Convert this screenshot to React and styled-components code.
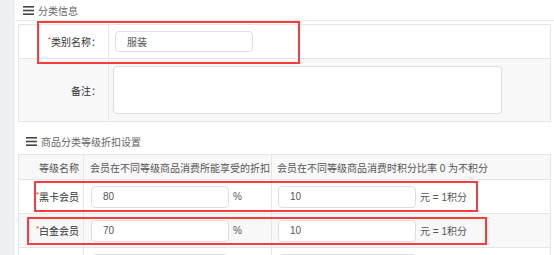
import React from 'react';
import styled, { createGlobalStyle } from 'styled-components';

const GlobalStyle = createGlobalStyle`
  html, body {
    margin: 0;
    padding: 0;
    background: #fff;
    overflow: hidden;
  }
  body {
    font-family: "Liberation Sans", "Noto Sans CJK SC", sans-serif;
    font-size: 10px;
    color: #555;
  }
`;

const Page = styled.div`
  position: relative;
  display: flex;
  width: 554px;
  height: 255px;
  overflow: hidden;
`;

const Side = styled.div`
  width: 15px;
  flex: none;
  background: #eef0f4;
`;

const Main = styled.div`
  flex: 1;
  display: flex;
  flex-direction: column;
`;

const SectionHead = styled.div`
  display: flex;
  align-items: center;
  gap: 4px;
  flex: none;
  height: ${p => p.$h}px;
  padding-left: ${p => p.$pad}px;
  padding-top: ${p => p.$top || 0}px;
  border-bottom: ${p => (p.$line ? '1px solid #ececec' : 'none')};
  color: #666;
  font-size: 10px;
  box-sizing: border-box;
`;

const Burger = () => (
  <svg width="11" height="9" viewBox="0 0 11 9">
    <rect x="0" y="0" width="11" height="1.6" fill="#444" />
    <rect x="0" y="3.7" width="11" height="1.6" fill="#444" />
    <rect x="0" y="7.4" width="11" height="1.6" fill="#444" />
  </svg>
);

const Grid = styled.div`
  margin-left: 3px;
  margin-top: ${p => p.$mt}px;
  width: 533px;
  box-sizing: border-box;
  border: 1px solid #e6e6e6;
  border-bottom: none;
  flex: none;
`;

const Row = styled.div`
  display: grid;
  grid-template-columns: ${p => p.$cols};
  height: ${p => p.$h}px;
  box-sizing: border-box;
  border-bottom: 1px solid #e6e6e6;
  background: ${p => (p.$alt ? '#f8f8f8' : '#fff')};
`;

const Cell = styled.div`
  display: flex;
  align-items: center;
  justify-content: ${p => (p.$right ? 'flex-end' : 'flex-start')};
  padding-left: ${p => p.$pl || 0}px;
  padding-right: ${p => p.$pr || 0}px;
  box-sizing: border-box;
  min-width: 0;
  white-space: nowrap;
  color: ${p => p.$dark ? '#333' : '#555'};
  &:not(:last-child) {
    border-right: 1px solid #e6e6e6;
  }
`;

const Star = styled.span`
  color: #e33;
  font-size: 8px;
  position: relative;
  top: -2px;
`;

const Field = styled.div`
  display: flex;
  align-items: center;
  flex: none;
  box-sizing: border-box;
  width: ${p => p.$w}px;
  height: ${p => p.$h}px;
  border: 1px solid #dedede;
  border-radius: 4px;
  background: #fff;
  padding-left: ${p => p.$pl || 11}px;
  color: #555;
  font-size: 10px;
`;

const Unit = styled.span`
  margin-left: 4px;
  color: #555;
`;

const Mark = styled.div`
  position: absolute;
  border: 2px solid #ff3a3a;
  box-sizing: border-box;
  pointer-events: none;
`;

const marks = [
  { left: 37, top: 21, width: 263, height: 43 },
  { left: 34, top: 181, width: 444, height: 31 },
  { left: 27, top: 217, width: 460, height: 28 },
];

const levels = [
  { name: '黑卡会员', discount: '80', rate: '10', alt: false },
  { name: '白金会员', discount: '70', rate: '10', alt: true },
  { name: '', discount: '', rate: '', alt: false },
];

const cols1 = '90px 1fr';
const cols2 = '65px 188px 1fr';

export default function App() {
  return (
    <>
      <GlobalStyle />
      <Page>
        <Side />
        <Main>
          <SectionHead $h={21} $pad={8} $line>
            <Burger />
            <span>分类信息</span>
          </SectionHead>
          <Grid $mt={3}>
            <Row $cols={cols1} $h={34}>
              <Cell $right $pr={7} $dark><Star>*</Star>类别名称：</Cell>
              <Cell $pl={6}><Field $w={138} $h={21}>服装</Field></Cell>
            </Row>
            <Row $cols={cols1} $h={63} $alt>
              <Cell $right $pr={7} $dark>备注：</Cell>
              <Cell $pl={4}><Field $w={389} $h={48} /></Cell>
            </Row>
          </Grid>
          <SectionHead $h={32} $pad={11} $top={6}>
            <Burger />
            <span>商品分类等级折扣设置</span>
          </SectionHead>
          <Grid $mt={0}>
            <Row $cols={cols2} $h={25} $alt>
              <Cell $right $pr={4}>等级名称</Cell>
              <Cell $pl={6}>会员在不同等级商品消费所能享受的折扣</Cell>
              <Cell $pl={5}>会员在不同等级商品消费时积分比率 0 为不积分</Cell>
            </Row>
            {levels.map((l, i) => (
              <Row key={i} $cols={cols2} $h={34} $alt={l.alt}>
                <Cell $right $pr={4} $dark>{l.name && <><Star>*</Star>{l.name}</>}</Cell>
                <Cell $pl={7}>
                  <Field $w={138} $h={22}>{l.discount}</Field>
                  {l.name && <Unit>%</Unit>}
                </Cell>
                <Cell $pl={6}>
                  <Field $w={138} $h={22}>{l.rate}</Field>
                  {l.name && <Unit>元 = 1积分</Unit>}
                </Cell>
              </Row>
            ))}
          </Grid>
        </Main>
        {marks.map((m, i) => (
          <Mark key={i} style={m} />
        ))}
      </Page>
    </>
  );
}
